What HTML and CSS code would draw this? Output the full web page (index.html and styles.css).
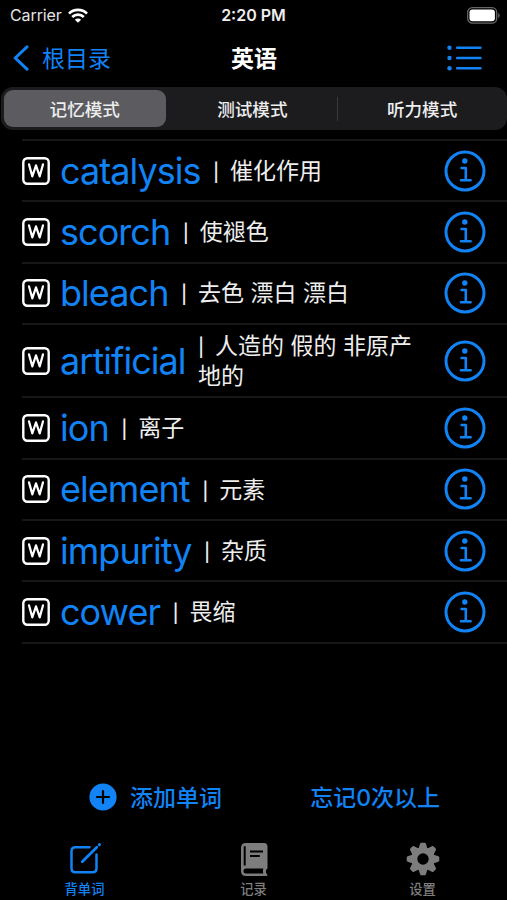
FILE: index.html
```
<!DOCTYPE html>
<html lang="zh-CN">
<head>
    <meta charset="UTF-8">
    <meta name="viewport" content="width=device-width, initial-scale=1.0">
    <title>英语</title>
    <link rel="stylesheet" href="styles.css">
</head>
<body>

<!-- 图标定义 -->
<svg class="defs" width="0" height="0">
    <symbol id="icon-word" viewBox="0 0 28 28">
        <rect x="1.3" y="1.3" width="25.4" height="25.4" rx="4" fill="none" stroke="#fff" stroke-width="2.4"/>
        <path d="M7 7.4 10.3 19.4 14 8.4 17.7 19.4 21 7.4" fill="none" stroke="#fff" stroke-width="2.2" stroke-linejoin="round" stroke-linecap="round"/>
    </symbol>
    <symbol id="icon-info" viewBox="0 0 42 42">
        <circle cx="21" cy="21" r="19" fill="none" stroke="currentColor" stroke-width="3"/>
        <circle cx="20.8" cy="11" r="2.7" fill="currentColor"/>
        <path d="M17.6 18h4.2v12.2M17 30.2h9.6" fill="none" stroke="currentColor" stroke-width="2.6" stroke-linecap="round" stroke-linejoin="round"/>
    </symbol>
</svg>

<div class="screen">
    <!-- 状态栏 -->
    <div class="status">
        <div class="carrier">
            <span>Carrier</span>
            <svg width="20" height="15" viewBox="0 0 20 15" fill="none" stroke="#fff" stroke-width="2.7">
                <path d="M1 5.6a12.8 12.8 0 0 1 18 0"/>
                <path d="M4.2 9a8.2 8.2 0 0 1 11.6 0"/>
                <path d="M10 14.8 6.9 11.7a4.4 4.4 0 0 1 6.2 0z" fill="#fff" stroke="none"/>
            </svg>
        </div>
        <div class="time">2:20 PM</div>
        <svg class="battery" width="33" height="17" viewBox="0 0 33 17">
            <rect x=".7" y=".7" width="29" height="15.4" rx="4.6" fill="none" stroke="#666" stroke-width="1.3"/>
            <rect x="2.5" y="2.6" width="25.4" height="11.6" rx="3" fill="#fff"/>
            <path d="M31.2 6v5q1.5-.8 1.5-2.5T31.2 6z" fill="#666"/>
        </svg>
    </div>

    <!-- 导航栏 -->
    <div class="nav">
        <div class="back">
            <svg width="16" height="26" viewBox="0 0 16 26">
                <path d="M14 1.8 2.2 13 14 24.2" fill="none" stroke="currentColor" stroke-width="3" stroke-linecap="round" stroke-linejoin="round"/>
            </svg>
            <span>根目录</span>
        </div>
        <div class="title">英语</div>
        <svg class="menu" width="36" height="26" viewBox="0 0 36 26">
            <g fill="currentColor"><circle cx="2.5" cy="2.8" r="2.2"/><circle cx="2.5" cy="13" r="2.2"/><circle cx="2.5" cy="23.2" r="2.2"/></g>
            <path d="M10.2 2.8h23.2M10.2 13h23.2M10.2 23.2h23.2" stroke="currentColor" stroke-width="2.6" stroke-linecap="round"/>
        </svg>
    </div>

    <!-- 模式切换 -->
    <div class="modes">
        <div class="mode active">记忆模式</div>
        <div class="mode">测试模式</div>
        <div class="mode divided">听力模式</div>
    </div>

    <!-- 单词列表 -->
    <div class="list">
        <div class="row">
            <svg class="tag"><use href="#icon-word"/></svg>
            <span class="word">catalysis</span>
            <span class="meaning"><span class="bar">|</span>催化作用</span>
            <svg class="info"><use href="#icon-info"/></svg>
        </div>
        <div class="row">
            <svg class="tag"><use href="#icon-word"/></svg>
            <span class="word">scorch</span>
            <span class="meaning"><span class="bar">|</span>使褪色</span>
            <svg class="info"><use href="#icon-info"/></svg>
        </div>
        <div class="row">
            <svg class="tag"><use href="#icon-word"/></svg>
            <span class="word">bleach</span>
            <span class="meaning"><span class="bar">|</span>去色 漂白 漂白</span>
            <svg class="info"><use href="#icon-info"/></svg>
        </div>
        <div class="row tall">
            <svg class="tag"><use href="#icon-word"/></svg>
            <span class="word">artificial</span>
            <span class="meaning"><span class="bar">|</span>人造的 假的 非原产地的</span>
            <svg class="info"><use href="#icon-info"/></svg>
        </div>
        <div class="row">
            <svg class="tag"><use href="#icon-word"/></svg>
            <span class="word">ion</span>
            <span class="meaning"><span class="bar">|</span>离子</span>
            <svg class="info"><use href="#icon-info"/></svg>
        </div>
        <div class="row">
            <svg class="tag"><use href="#icon-word"/></svg>
            <span class="word">element</span>
            <span class="meaning"><span class="bar">|</span>元素</span>
            <svg class="info"><use href="#icon-info"/></svg>
        </div>
        <div class="row">
            <svg class="tag"><use href="#icon-word"/></svg>
            <span class="word">impurity</span>
            <span class="meaning"><span class="bar">|</span>杂质</span>
            <svg class="info"><use href="#icon-info"/></svg>
        </div>
        <div class="row">
            <svg class="tag"><use href="#icon-word"/></svg>
            <span class="word">cower</span>
            <span class="meaning"><span class="bar">|</span>畏缩</span>
            <svg class="info"><use href="#icon-info"/></svg>
        </div>
    </div>

    <!-- 底部操作 -->
    <div class="actions">
        <div class="add">
            <svg width="28" height="28" viewBox="0 0 28 28">
                <circle cx="14" cy="14" r="13.6" fill="currentColor"/>
                <path d="M14 8v12M8 14h12" stroke="#000" stroke-width="2.2" stroke-linecap="round"/>
            </svg>
            <span>添加单词</span>
        </div>
        <div class="forget">忘记0次以上</div>
    </div>

    <!-- 标签栏 -->
    <div class="tabs">
        <div class="tab active">
            <svg width="34" height="34" viewBox="0 0 34 34" fill="none" stroke="currentColor" stroke-width="2.5" stroke-linecap="round">
                <path d="M21.5 5.2H7.5q-4 0-4 4v17q0 4 4 4h17q4 0 4-4V12.5"/>
                <path d="M14.2 19.8 28.8 5.2" stroke-width="2.8"/>
                <path d="M31.3 2.7l.2-.2" stroke-width="3"/>
            </svg>
            <span>背单词</span>
        </div>
        <div class="tab">
            <svg width="34" height="34" viewBox="0 0 34 34">
                <path d="M9 1h18q3.5 0 3.5 3.5v21.3q0 1.2-1 1.5-1.2 2.5 0 4.4 1 .3 1 1.1 0 1.2-1.5 1.2H9q-5 0-5-5V6q0-5 5-5z" fill="currentColor"/>
                <path d="M7.7 4.2v19.2M13 9.6h13M13 14h9.8" stroke="#000" stroke-width="2" fill="none"/>
                <path d="M8.8 26.6h17.6q-1 2.6 0 5H8.8q-2.4 0-2.4-2.5t2.4-2.5z" fill="#000"/>
            </svg>
            <span>记录</span>
        </div>
        <div class="tab">
            <svg width="34" height="34" viewBox="-17 -17 34 34" fill="currentColor">
                <path id="tooth" d="M-4.6-10-2.8-15.4q.3-.9 1.2-.9h3.2q.9 0 1.2.9L4.6-10v20L2.8 15.4q-.3.9-1.2.9h-3.2q-.9 0-1.2-.9L-4.6 10z"/>
                <use href="#tooth" transform="rotate(45)"/>
                <use href="#tooth" transform="rotate(90)"/>
                <use href="#tooth" transform="rotate(135)"/>
                <circle r="11.8"/>
                <circle r="5.7" fill="#000"/>
            </svg>
            <span>设置</span>
        </div>
    </div>
</div>

</body>
</html>
```
FILE: styles.css
```
* {
    box-sizing: border-box;
}
body {
    margin: 0;
    background: #000;
    color: #fff;
    font-family: Inter, "Noto Sans CJK SC", sans-serif;
}
svg {
    display: block;
    flex: none;
}
.defs {
    position: absolute;
}
.screen {
    width: 507px;
    height: 900px;
    overflow: hidden;
    display: flex;
    flex-direction: column;
}

/* 状态栏 */
.status {
    height: 30px;
    padding: 0 7px 0 10px;
    display: grid;
    grid-template-columns: 1fr auto 1fr;
    align-items: center;
    font-size: 16px;
    line-height: 30px;
}
.carrier {
    display: flex;
    align-items: center;
    gap: 6px;
    color: #e4e4e4;
    letter-spacing: -0.1px;
}
.time {
    font-weight: 600;
    color: #eee;
    margin-left: -3px;
}
.battery {
    justify-self: end;
}

/* 导航栏 */
.nav {
    height: 57px;
    padding: 0 24px 0 13px;
    display: grid;
    grid-template-columns: 1fr auto 1fr;
    align-items: center;
    color: #1283f5;
    font-size: 23px;
}
.back {
    display: flex;
    align-items: center;
    gap: 13px;
    margin-top: -1px;
}
.back span {
    margin-top: -2px;
}
.title {
    color: #fff;
    font-weight: 700;
    margin: -3px -6px 0 6px;
}
.menu {
    justify-self: end;
    margin-top: -1px;
}

/* 模式切换 */
.modes {
    height: 43px;
    margin-left: 1px;
    padding: 3px 0 3px 3px;
    display: flex;
    border-radius: 12px;
    background: #1c1c1e;
    font-size: 17.6px;
    font-weight: 500;
    color: #eee;
}
.mode {
    flex: 1;
    display: flex;
    align-items: center;
    justify-content: center;
    border-radius: 9px;
    padding-bottom: 1px;
}
.mode.active {
    flex: 0 0 161.5px;
    margin-right: 2px;
    background: #5b5b60;
}
.mode.divided {
    background: linear-gradient(#3a3a3e, #3a3a3e) 0 50% / 1px 24px no-repeat;
    border-radius: 0;
}

/* 单词列表 */
.list {
    margin: 9px 0 0 22px;
    border-top: 2px solid #17171a;
}
.row {
    height: 61.3px;
    display: flex;
    align-items: center;
    padding-right: 21px;
    border-bottom: 2px solid #17171a;
}
.row.tall {
    height: 73.5px;
}
.tag {
    width: 28px;
    height: 28px;
}
.word {
    margin-left: 10px;
    color: #1283f5;
    font-size: 36px;
    line-height: 44px;
    letter-spacing: -0.95px;
}
.meaning {
    flex: 1;
    margin: 2px 11px 0 12.5px;
    font-size: 23px;
    line-height: 29.5px;
    color: #eee;
}
.bar {
    display: inline-block;
    width: 17px;
    font-size: 18px;
    font-weight: 500;
    line-height: 20px;
}
.info {
    width: 42px;
    height: 42px;
    color: #1283f5;
}

/* 底部操作 */
.actions {
    margin-top: auto;
    height: 60px;
    padding: 0 67px 0 89px;
    display: flex;
    align-items: center;
    justify-content: space-between;
    color: #1283f5;
    font-size: 23px;
    font-weight: 500;
}
.add {
    display: flex;
    align-items: center;
    gap: 13px;
}
.add span,
.forget {
    margin-top: -3px;
}

/* 标签栏 */
.tabs {
    height: 73px;
    padding-top: 15px;
    display: flex;
}
.tab {
    flex: 1;
    display: flex;
    flex-direction: column;
    align-items: center;
    gap: 4px;
    color: #7d7d7d;
    font-size: 13.3px;
    line-height: 19px;
    font-weight: 500;
}
.tab.active {
    color: #1283f5;
}
```
